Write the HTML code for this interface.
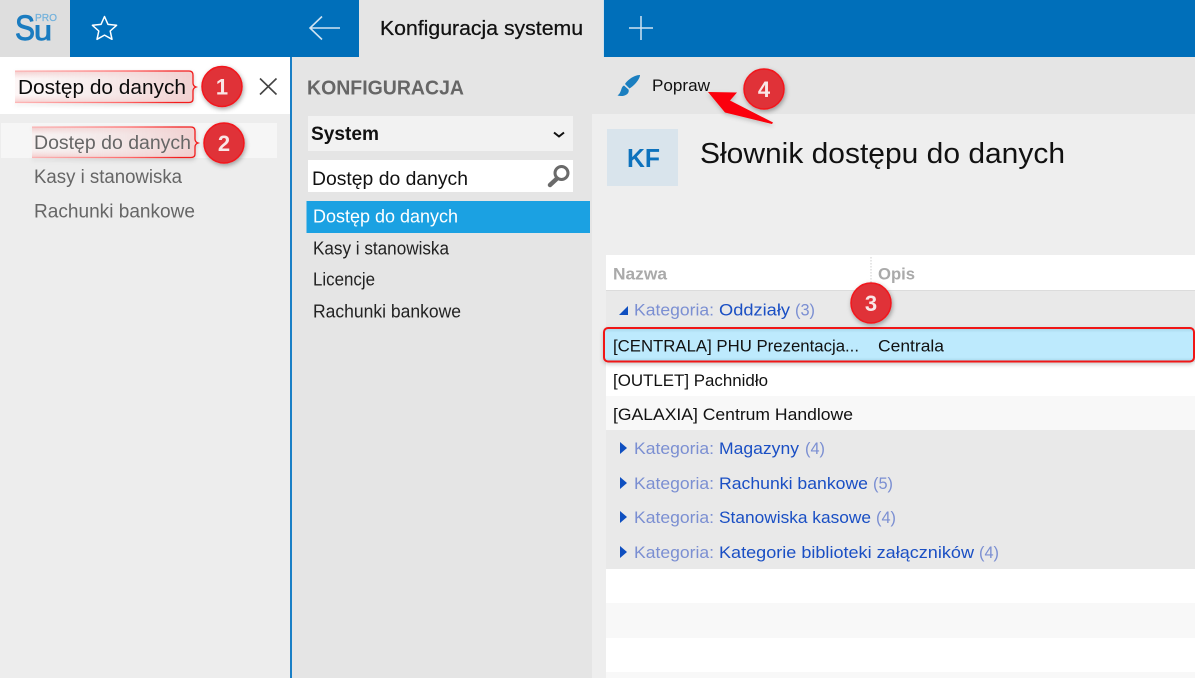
<!DOCTYPE html>
<html><head><meta charset="utf-8"><style>
html,body{margin:0;padding:0;background:#eee;overflow:hidden}
svg{display:block}
text{font-family:"Liberation Sans",sans-serif}
</style></head><body>
<svg width="1195" height="678" viewBox="0 0 1195 678" xmlns="http://www.w3.org/2000/svg">
<defs>
<filter id="sh" x="-40%" y="-40%" width="180%" height="180%"><feDropShadow dx="1" dy="2" stdDeviation="2.5" flood-color="#000" flood-opacity=".35"/></filter>
<filter id="sh2" x="-5%" y="-30%" width="110%" height="160%"><feDropShadow dx="0" dy="2" stdDeviation="2" flood-color="#000" flood-opacity=".2"/></filter>
<linearGradient id="calv" x1="0" y1="0" x2="0" y2="1"><stop offset="0" stop-color="#f6bcbc" stop-opacity=".75"/><stop offset=".25" stop-color="#fbeaea" stop-opacity=".4"/><stop offset=".75" stop-color="#fbeaea" stop-opacity=".4"/><stop offset="1" stop-color="#f6bcbc" stop-opacity=".75"/></linearGradient>
<linearGradient id="calh" x1="0" y1="0" x2="1" y2="0"><stop offset="0" stop-color="#fff" stop-opacity="0"/><stop offset=".5" stop-color="#fbe9e9" stop-opacity=".5"/><stop offset="1" stop-color="#f3cfcf" stop-opacity=".9"/></linearGradient>
<linearGradient id="cals" x1="0" y1="0" x2="1" y2="0"><stop offset="0" stop-color="#f99" stop-opacity=".6"/><stop offset=".6" stop-color="#f66"/><stop offset=".9" stop-color="#f21a1a"/></linearGradient>
<linearGradient id="rowg" x1="0" y1="0" x2="0" y2="1"><stop offset="0" stop-color="#a5d5e8"/><stop offset=".14" stop-color="#bdeafd"/><stop offset=".88" stop-color="#bdeafd"/><stop offset="1" stop-color="#a5d5e8"/></linearGradient>
</defs>

<!-- backgrounds -->
<rect width="1195" height="678" fill="#eeeeee"/>
<rect x="0" y="0" width="1195" height="57" fill="#006fba"/>
<rect x="0" y="0" width="70" height="57" fill="#dedede"/>
<rect x="359" y="0" width="244" height="57" fill="#e5e5e5"/>
<rect x="603" y="0" width="1" height="57" fill="#cfe0ec"/>
<rect x="0" y="57" width="290" height="57" fill="#ffffff"/>
<rect x="0" y="114" width="290" height="564" fill="#ededed"/>
<rect x="290" y="57" width="2" height="621" fill="#1a7fc6"/>
<rect x="292" y="57" width="300" height="621" fill="#e5e5e5"/>
<rect x="592" y="57" width="603" height="57" fill="#e5e5e5"/>
<rect x="592" y="114" width="603" height="564" fill="#eeeeee"/>

<!-- logo -->
<text x="15" y="40" font-size="35" fill="#1a7cc0" stroke="#1a7cc0" stroke-width=".9" textLength="20" lengthAdjust="spacingAndGlyphs">S</text>
<text x="34" y="40" font-size="28" fill="#1a7cc0" stroke="#1a7cc0" stroke-width=".9" textLength="18" lengthAdjust="spacingAndGlyphs">u</text>
<text x="35" y="21" font-size="10.500" fill="#74b2dc" stroke="#74b2dc" stroke-width=".25" textLength="22" lengthAdjust="spacingAndGlyphs">PRO</text>
<!-- star -->
<path d="M104.500 16.500 L108 24.400 L116.600 25.300 L110.200 31 L112 39.300 L104.500 35.100 L97 39.300 L98.800 31 L92.400 25.300 L101 24.400 Z" fill="none" stroke="#ffffff" stroke-width="1.500" stroke-linejoin="round"/>
<!-- back arrow -->
<path d="M340 28 H311 M322 16.500 L310 28 L322 39.500" fill="none" stroke="#cfe3f2" stroke-width="1.600"/>
<!-- tab -->
<text x="380" y="35" font-size="20" fill="#111" stroke="#111" stroke-width=".25" textLength="203" lengthAdjust="spacingAndGlyphs">Konfiguracja systemu</text>
<!-- plus -->
<path d="M641 16 V40 M629 28 H653" fill="none" stroke="#cfe3f2" stroke-width="1.500"/>

<!-- left search -->
<path d="M15 71 H189 Q193 71 193 75 V83 Q193 86 196 87 Q193 88 193 91 V99 Q193 102.500 189 102.500 H15" fill="url(#calv)" stroke="none"/>
<path d="M15 71 H189 Q193 71 193 75 V83 Q193 86 196 87 Q193 88 193 91 V99 Q193 102.500 189 102.500 H15" fill="url(#calh)" stroke="url(#cals)" stroke-width="1.300" filter="url(#sh2)"/>
<text x="18" y="94" font-size="20.500" fill="#0a0a0a" textLength="168" lengthAdjust="spacingAndGlyphs">Dostęp do danych</text>
<path d="M260 78.500 L276.500 94.500 M276.500 78.500 L260 94.500" stroke="#444" stroke-width="1.600" fill="none"/>

<!-- left list -->
<rect x="1" y="123" width="276" height="35" fill="#f6f6f6"/>
<path d="M32 127 H191 Q195 127 195 131 V139 Q195 142 198 143 Q195 144 195 147 V154 Q195 157.500 191 157.500 H32" fill="url(#calv)" stroke="none"/>
<path d="M32 127 H191 Q195 127 195 131 V139 Q195 142 198 143 Q195 144 195 147 V154 Q195 157.500 191 157.500 H32" fill="url(#calh)" stroke="url(#cals)" stroke-width="1.300" filter="url(#sh2)"/>
<text x="34" y="149" font-size="19" fill="#666" textLength="157" lengthAdjust="spacingAndGlyphs">Dostęp do danych</text>
<text x="34" y="183" font-size="19" fill="#666" textLength="148" lengthAdjust="spacingAndGlyphs">Kasy i stanowiska</text>
<text x="34" y="217.500" font-size="19" fill="#666" textLength="161" lengthAdjust="spacingAndGlyphs">Rachunki bankowe</text>

<!-- middle panel -->
<text x="307" y="94.500" font-size="20" font-weight="700" fill="#666" textLength="157" lengthAdjust="spacingAndGlyphs">KONFIGURACJA</text>
<rect x="308" y="116" width="265" height="35" fill="#f2f2f2"/>
<text x="311" y="140" font-size="19.500" font-weight="700" fill="#111" textLength="68" lengthAdjust="spacingAndGlyphs">System</text>
<path d="M554 132.500 L559 136.500 L564 132.500" fill="none" stroke="#111" stroke-width="2"/>
<rect x="308" y="160" width="265" height="32" fill="#ffffff"/>
<text x="312" y="185" font-size="19.500" fill="#111" textLength="156" lengthAdjust="spacingAndGlyphs">Dostęp do danych</text>
<circle cx="561.500" cy="173" r="6.500" fill="none" stroke="#6a6a6a" stroke-width="3"/>
<path d="M556.500 179 L550 185" stroke="#6a6a6a" stroke-width="4.500" stroke-linecap="round"/>
<rect x="306.500" y="201" width="283.500" height="32" fill="#1ba1e2"/>
<text x="313" y="222.500" font-size="18" fill="#ffffff" textLength="145" lengthAdjust="spacingAndGlyphs">Dostęp do danych</text>
<text x="313" y="254.500" font-size="18" fill="#222" textLength="136" lengthAdjust="spacingAndGlyphs">Kasy i stanowiska</text>
<text x="313" y="285.500" font-size="18" fill="#222" textLength="62" lengthAdjust="spacingAndGlyphs">Licencje</text>
<text x="313" y="317.500" font-size="18" fill="#222" textLength="148" lengthAdjust="spacingAndGlyphs">Rachunki bankowe</text>

<!-- toolbar -->
<path d="M640 75 C636 74.500 628 79 625 84 L629.500 88.500 C634.500 85.500 640 79 640 75 Z M624 85.500 C620.500 87 622 92.500 617.500 95.500 C624.500 97.500 630 93.500 628.500 89.500 Z" fill="#1b7fc0"/>
<text x="652" y="91" font-size="17" fill="#111" textLength="58" lengthAdjust="spacingAndGlyphs">Popraw</text>

<!-- header -->
<rect x="607" y="129" width="71" height="57" fill="#d9e4ec"/>
<text x="627" y="167" font-size="26" font-weight="700" fill="#0d72bd" textLength="33" lengthAdjust="spacingAndGlyphs">KF</text>
<text x="700" y="163" font-size="29" fill="#111" textLength="365" lengthAdjust="spacingAndGlyphs">Słownik dostępu do danych</text>

<!-- grid -->
<rect x="606" y="255" width="589" height="35" fill="#ffffff"/>
<rect x="606" y="290" width="589" height="1.500" fill="#dcdcdc"/>
<text x="613" y="279.500" font-size="17" font-weight="700" fill="#aaaaaa" textLength="54" lengthAdjust="spacingAndGlyphs">Nazwa</text>
<text x="878" y="279.500" font-size="17" font-weight="700" fill="#aaaaaa" textLength="37" lengthAdjust="spacingAndGlyphs">Opis</text>
<path d="M871 257 V290" stroke="#cccccc" stroke-width="1" stroke-dasharray="1.500 1.500"/>
<rect x="606" y="291" width="589" height="37" fill="#e9e9e9"/>
<rect x="606" y="362" width="589" height="34" fill="#ffffff"/>
<rect x="606" y="396" width="589" height="34" fill="#f8f8f8"/>
<rect x="606" y="430" width="589" height="139" fill="#e9e9e9"/>
<rect x="606" y="569" width="589" height="34" fill="#ffffff"/>
<rect x="606" y="603" width="589" height="35" fill="#f8f8f8"/>
<rect x="606" y="638" width="589" height="34" fill="#ffffff"/>
<rect x="606" y="672" width="589" height="6" fill="#f8f8f8"/>

<!-- group rows -->
<path d="M628 306 V315 H619 Z" fill="#0f4fc0"/>
<text x="634" y="315.500" font-size="17" fill="#7b8fd2" textLength="80" lengthAdjust="spacingAndGlyphs">Kategoria:</text>
<text x="719" y="315.500" font-size="17" fill="#1a4fc4" textLength="71" lengthAdjust="spacingAndGlyphs">Oddziały</text>
<text x="795" y="315.500" font-size="17" fill="#7b8fd2" textLength="20" lengthAdjust="spacingAndGlyphs">(3)</text>

<path d="M620 442 L627 448 L620 454 Z" fill="#0f4fc0"/>
<text x="634" y="454" font-size="17" fill="#7b8fd2" textLength="80" lengthAdjust="spacingAndGlyphs">Kategoria:</text>
<text x="719" y="454" font-size="17" fill="#1a4fc4" textLength="80" lengthAdjust="spacingAndGlyphs">Magazyny</text>
<text x="805" y="454" font-size="17" fill="#7b8fd2" textLength="20" lengthAdjust="spacingAndGlyphs">(4)</text>

<path d="M620 477 L627 483 L620 489 Z" fill="#0f4fc0"/>
<text x="634" y="489" font-size="17" fill="#7b8fd2" textLength="80" lengthAdjust="spacingAndGlyphs">Kategoria:</text>
<text x="719" y="489" font-size="17" fill="#1a4fc4" textLength="149" lengthAdjust="spacingAndGlyphs">Rachunki bankowe</text>
<text x="873" y="489" font-size="17" fill="#7b8fd2" textLength="20" lengthAdjust="spacingAndGlyphs">(5)</text>

<path d="M620 511 L627 517 L620 523 Z" fill="#0f4fc0"/>
<text x="634" y="523" font-size="17" fill="#7b8fd2" textLength="80" lengthAdjust="spacingAndGlyphs">Kategoria:</text>
<text x="719" y="523" font-size="17" fill="#1a4fc4" textLength="152" lengthAdjust="spacingAndGlyphs">Stanowiska kasowe</text>
<text x="876" y="523" font-size="17" fill="#7b8fd2" textLength="20" lengthAdjust="spacingAndGlyphs">(4)</text>

<path d="M620 546 L627 552 L620 558 Z" fill="#0f4fc0"/>
<text x="634" y="558" font-size="17" fill="#7b8fd2" textLength="80" lengthAdjust="spacingAndGlyphs">Kategoria:</text>
<text x="719" y="558" font-size="17" fill="#1a4fc4" textLength="255" lengthAdjust="spacingAndGlyphs">Kategorie biblioteki załączników</text>
<text x="979" y="558" font-size="17" fill="#7b8fd2" textLength="20" lengthAdjust="spacingAndGlyphs">(4)</text>

<!-- selected row -->
<rect x="604" y="328" width="590" height="33.500" rx="4" fill="url(#rowg)" stroke="#f01414" stroke-width="2" filter="url(#sh2)"/>
<text x="613" y="351.500" font-size="17" fill="#111" textLength="246" lengthAdjust="spacingAndGlyphs">[CENTRALA] PHU Prezentacja...</text>
<text x="878" y="351.500" font-size="17" fill="#111" textLength="66" lengthAdjust="spacingAndGlyphs">Centrala</text>
<text x="613" y="386" font-size="17" fill="#111" textLength="155" lengthAdjust="spacingAndGlyphs">[OUTLET] Pachnidło</text>
<text x="613" y="420" font-size="17" fill="#111" textLength="240" lengthAdjust="spacingAndGlyphs">[GALAXIA] Centrum Handlowe</text>

<!-- arrow -->
<path d="M708 92 L737 92.500 L730 100.500 L773 122.500 L772 124 L725 112.500 Z" fill="#fb0007" filter="url(#sh2)"/>

<!-- badges -->
<g filter="url(#sh)" fill="#e03238" stroke="#f2161c" stroke-width="1.500">
<circle cx="222" cy="86.500" r="20"/>
<circle cx="224" cy="143" r="20"/>
<circle cx="871" cy="303" r="20"/>
<circle cx="764" cy="89" r="20"/>
</g>
<g font-size="22" font-weight="700" fill="#f9e6e6" text-anchor="middle">
<text x="222" y="94.500">1</text>
<text x="224" y="151">2</text>
<text x="871" y="311">3</text>
<text x="764" y="97">4</text>
</g>
</svg>
</body></html>
